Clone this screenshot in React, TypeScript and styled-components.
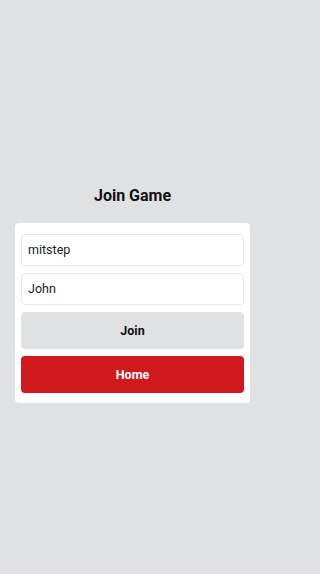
import styled, { createGlobalStyle } from 'styled-components'

const GlobalStyle = createGlobalStyle`
  html, body {
    margin: 0;
    padding: 0;
    background: #e0e1e3;
    font-family: Roboto, "Liberation Sans", sans-serif;
  }
`;

const Page = styled.div`
  width: 265px;
  min-height: 100vh;
  box-sizing: border-box;
  display: flex;
  flex-direction: column;
  justify-content: center;
  padding: 14px 15px 0;
`;

const Title = styled.h1`
  margin: 0 0 18px;
  text-align: center;
  font-size: 16px;
  font-weight: 700;
  color: #111;
`;

const Card = styled.div`
  background: #fff;
  border-radius: 4px;
  padding: 11px 6px 10px;
  display: flex;
  flex-direction: column;
  gap: 7px;
`;

const Input = styled.input`
  box-sizing: border-box;
  height: 32px;
  width: 100%;
  padding: 0 6px;
  border: 1px solid #e8e8ea;
  border-radius: 4px;
  font-family: inherit;
  font-size: 12.5px;
  color: #1a1a1a;
  background: #fff;
  outline: none;
`;

const Button = styled.button<{ variant?: 'primary' | 'danger' }>`
  height: 37px;
  border: none;
  border-radius: 4px;
  font-family: inherit;
  font-size: 12.5px;
  font-weight: 700;
  background: ${(p) => (p.variant === 'danger' ? '#d0191d' : '#e0e1e3')};
  color: ${(p) => (p.variant === 'danger' ? '#fff' : '#111')};
`;

export default function App() {
  return (
    <>
      <GlobalStyle />
      <Page>
        <Title>Join Game</Title>
        <Card>
          <Input defaultValue="mitstep" />
          <Input defaultValue="John" />
          <Button>Join</Button>
          <Button variant="danger">Home</Button>
        </Card>
      </Page>
    </>
  )
}
